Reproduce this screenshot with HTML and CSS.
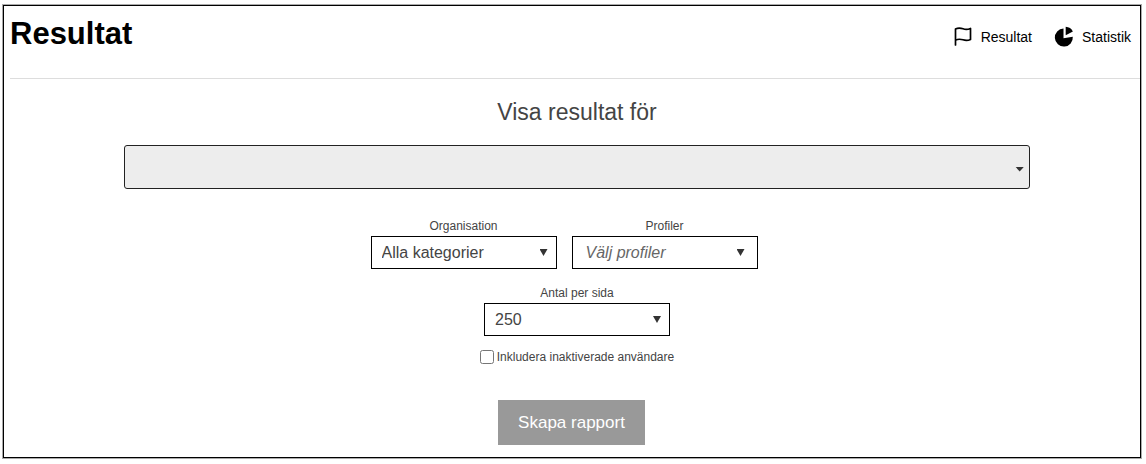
FILE: index.html
```html
<!DOCTYPE html>
<html lang="sv">
<head>
<meta charset="utf-8">
<meta name="viewport" content="width=device-width, initial-scale=1">
<title>Resultat</title>
<link rel="stylesheet" href="styles.css">
</head>
<body>
<div class="frame">
  <header class="header">
    <h1 class="title">Resultat</h1>
    <nav class="nav">
      <a class="nav-link" href="#resultat">
        <svg class="icon" width="20" height="24" viewBox="0 0 20 24" fill="none" stroke="#000" stroke-width="1.700" stroke-linecap="round" stroke-linejoin="round" aria-hidden="true"><path d="M2.500 20V4C5.500 2.400 8 3 10 3.800S14.500 4.800 17.500 3.400V14.400C14.500 15.800 12 15.400 10 14.800S5.500 13.600 2.500 15.200"/></svg>
        <span>Resultat</span>
      </a>
      <a class="nav-link" href="#statistik">
        <svg class="icon" width="20" height="24" viewBox="0 0 20 24" aria-hidden="true"><path d="M9.500 3.600A9 9 0 1 0 18.800 11.800L9.500 13.200Z"/><path d="M11.700 1.800A8.500 8.500 0 0 1 18.900 6.500L11.700 10.300Z"/></svg>
        <span>Statistik</span>
      </a>
    </nav>
  </header>
  <main class="main">
    <form class="form">
      <label class="heading" for="result">Visa resultat för</label>
      <div class="picker picker-wide">
        <select class="select select-wide" id="result"><option value=""></option></select>
      </div>
      <div class="filters">
        <div class="field">
          <label for="org">Organisation</label>
          <div class="picker"><select class="select" id="org"><option>Alla kategorier</option></select></div>
        </div>
        <div class="field">
          <label for="profiles">Profiler</label>
          <div class="picker picker-inset"><select class="select select-placeholder" id="profiles"><option>Välj profiler</option></select></div>
        </div>
      </div>
      <div class="field">
        <label for="per-page">Antal per sida</label>
        <div class="picker"><select class="select" id="per-page"><option>250</option></select></div>
      </div>
      <label class="check"><input class="checkbox" type="checkbox"><span>Inkludera inaktiverade användare</span></label>
      <button class="submit" type="button">Skapa rapport</button>
    </form>
  </main>
</div>
</body>
</html>
```
FILE: styles.css
```css
* {
  box-sizing: border-box;
}

body {
  margin: 0;
  padding: 5px 5px 5px 3px;
  background: #fff;
  color: #444;
  font-family: "Liberation Sans", Arial, sans-serif;
  font-size: 12px;
}

.frame {
  border: 1px solid #000;
  box-shadow: 0 0 0 1px #aaa;
}

.header {
  display: flex;
  justify-content: space-between;
  align-items: flex-start;
  margin-left: 6px;
  padding: 8px 9px 24px 0;
  border-bottom: 1px solid #ddd;
  color: #000;
}

.title {
  margin: 0;
  font-size: 31px;
  line-height: 40px;
}

.nav {
  display: flex;
  gap: 22px;
  padding-top: 11px;
}

.nav-link {
  display: flex;
  align-items: center;
  gap: 8px;
  color: #000;
  font-size: 14px;
  line-height: 24px;
  text-decoration: none;
}

.icon {
  display: block;
}

.main {
  padding: 19px 0 12px 10px;
}

.form {
  display: flex;
  flex-direction: column;
  align-items: center;
}

.heading {
  margin-bottom: 19px;
  font-size: 23px;
  line-height: 28px;
}

.picker {
  display: grid;
  align-items: center;
  width: 186px;
}

.picker > .select,
.picker::after {
  grid-area: 1 / 1;
}

.picker::after {
  content: "";
  justify-self: end;
  width: 8px;
  height: 7px;
  margin-right: 9px;
  background: #333;
  clip-path: polygon(0 0, 100% 0, 50% 100%);
  pointer-events: none;
}

.picker-inset::after {
  margin-right: 13px;
}

.picker-wide {
  width: 80.5%;
  margin-bottom: 30px;
}

.picker-wide::after {
  width: 9px;
  height: 5px;
  margin: 4px 6px 0 0;
}

.select {
  appearance: none;
  width: 100%;
  height: 33px;
  margin: 0;
  padding: 0 32px 0 10px;
  border: 1px solid #000;
  border-radius: 0;
  background: #fff;
  color: #444;
  font-family: inherit;
  font-size: 16px;
}

.select-wide {
  height: 44px;
  border-color: #222;
  border-radius: 3px;
  background: #ededed;
}

.select-placeholder {
  padding-left: 13px;
  color: #666;
  font-style: italic;
}

.filters {
  display: flex;
  gap: 15px;
  margin: 0 26px 17px 0;
}

.field {
  display: flex;
  flex-direction: column;
  align-items: center;
  gap: 3px;
  line-height: 14px;
}

.check {
  display: flex;
  align-items: center;
  gap: 3px;
  margin: 13px 0 35px;
  line-height: 16px;
}

.checkbox {
  width: 14px;
  height: 14px;
  margin: 0;
}

.submit {
  margin-right: 11px;
  padding: 0 20px;
  border: 0;
  background: #999;
  color: #fff;
  font-family: inherit;
  font-size: 17px;
  line-height: 45px;
}
```
